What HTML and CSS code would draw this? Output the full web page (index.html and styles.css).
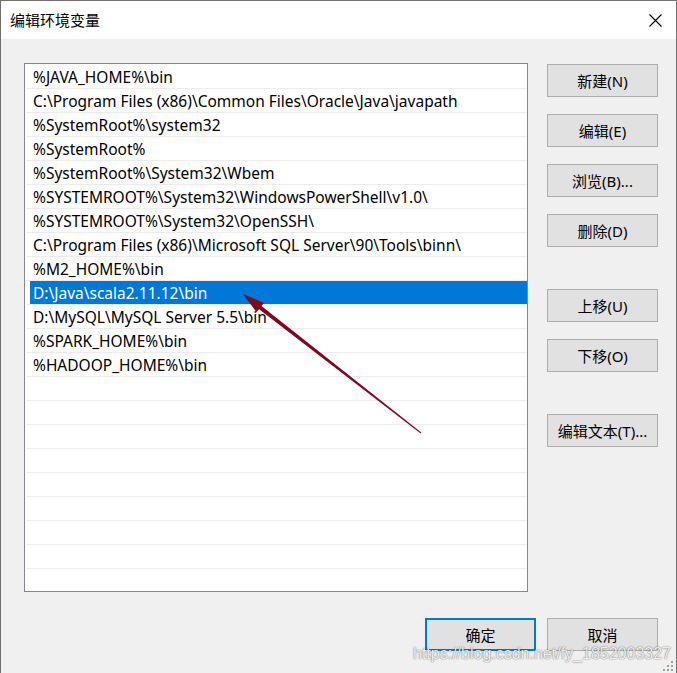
FILE: index.html
```html
<!DOCTYPE html>
<html lang="zh-CN">
<head>
<meta charset="utf-8">
<title>编辑环境变量</title>
<link rel="stylesheet" href="styles.css">
</head>
<body>
<div class="window">
  <div class="titlebar">
    <span class="title">编辑环境变量</span>
    <svg class="close" width="13" height="13" viewBox="0 0 13 13"><path d="M0.5 0.5 L12.5 12.5 M12.5 0.5 L0.5 12.5" stroke="#000" stroke-width="1.1" fill="none"/></svg>
  </div>
  <div class="content">
    <div class="main">
      <div class="list">
        <div class="row">%JAVA_HOME%\bin</div>
        <div class="row">C:\Program Files (x86)\Common Files\Oracle\Java\javapath</div>
        <div class="row">%SystemRoot%\system32</div>
        <div class="row">%SystemRoot%</div>
        <div class="row">%SystemRoot%\System32\Wbem</div>
        <div class="row">%SYSTEMROOT%\System32\WindowsPowerShell\v1.0\</div>
        <div class="row">%SYSTEMROOT%\System32\OpenSSH\</div>
        <div class="row">C:\Program Files (x86)\Microsoft SQL Server\90\Tools\binn\</div>
        <div class="row">%M2_HOME%\bin</div>
        <div class="row selected">D:\Java\scala2.11.12\bin</div>
        <div class="row">D:\MySQL\MySQL Server 5.5\bin</div>
        <div class="row">%SPARK_HOME%\bin</div>
        <div class="row">%HADOOP_HOME%\bin</div>
        <div class="row"></div>
        <div class="row"></div>
        <div class="row"></div>
        <div class="row"></div>
        <div class="row"></div>
        <div class="row"></div>
        <div class="row"></div>
        <div class="row"></div>
        <div class="row"></div>
      </div>
      <div class="side">
        <button class="btn">新建(N)</button>
        <button class="btn gap-s">编辑(E)</button>
        <button class="btn gap-s">浏览(B)...</button>
        <button class="btn gap-s">删除(D)</button>
        <button class="btn gap-l">上移(U)</button>
        <button class="btn gap-s">下移(O)</button>
        <button class="btn gap-l">编辑文本(T)...</button>
      </div>
    </div>
    <div class="footer">
      <button class="btn default">确定</button>
      <button class="btn">取消</button>
    </div>
  </div>
  <svg class="arrow" width="677" height="673" viewBox="0 0 677 673">
    <polygon points="243,294 264,302.9 261.5,306 421.3,432.6 420.7,433.4 259.1,309.2 256.6,312.3" fill="#80091b"/>
  </svg>
  <div class="watermark">https://blog.csdn.net/fy_1852003327</div>
  <svg class="grip" width="12" height="12" viewBox="0 0 12 12">
    <g fill="#a0a0a0">
      <rect x="9" y="1" width="2" height="2"/>
      <rect x="5" y="5" width="2" height="2"/>
      <rect x="9" y="5" width="2" height="2"/>
      <rect x="1" y="9" width="2" height="2"/>
      <rect x="5" y="9" width="2" height="2"/>
      <rect x="9" y="9" width="2" height="2"/>
    </g>
  </svg>
</div>
</body>
</html>
```

FILE: styles.css
```css
* {
  box-sizing: border-box;
}

html, body {
  margin: 0;
  padding: 0;
  background: #f0f0f0;
}

body {
  font-family: "Noto Sans", "Noto Sans CJK SC", sans-serif;
  font-size: 15px;
  color: #000;
}

.window {
  position: relative;
  width: 677px;
  height: 673px;
  overflow: hidden;
  background: #f0f0f0;
  border: 1px solid #707070;
  border-bottom: 0;
}

.titlebar {
  height: 38px;
  background: #fff;
  display: flex;
  align-items: center;
  justify-content: space-between;
  padding-left: 9px;
  padding-right: 14px;
}

.title {
  font-family: "Noto Sans CJK SC", sans-serif;
  font-size: 15px;
  line-height: 20px;
}

.close {
  display: block;
}

.content {
  padding: 24px 18px 0 23px;
}

.main {
  display: flex;
  gap: 19px;
}

.list {
  width: 504px;
  height: 529px;
  background: #fff;
  border: 1px solid #828790;
  padding-top: 1px;
  overflow: hidden;
}

.row {
  height: 24px;
  margin-left: 1px;
  border-bottom: 1px solid #ececec;
  padding-left: 7px;
  padding-top: 1px;
  font-size: 15.5px;
  line-height: 22px;
  white-space: nowrap;
}

.row.selected {
  background: linear-gradient(to right, transparent 4px, #0078d7 4px);
  color: #fff;
}

.side {
  width: 111px;
  padding-top: 1px;
  display: flex;
  flex-direction: column;
}

.btn {
  width: 111px;
  height: 33px;
  background: #e1e1e1;
  border: 1px solid #adadad;
  border-radius: 0;
  font-family: "Noto Sans", "Noto Sans CJK SC", sans-serif;
  font-size: 15px;
  color: #000;
  padding: 0;
  line-height: 20px;
}

.gap-s {
  margin-top: 17px;
}

.gap-l {
  margin-top: 42px;
}

.footer {
  display: flex;
  justify-content: flex-end;
  gap: 11px;
  margin-top: 26px;
}

.btn.default {
  border: 2px solid #0078d7;
}

.arrow {
  position: absolute;
  left: -1px;
  top: -1px;
  pointer-events: none;
}

.watermark {
  position: absolute;
  left: 412px;
  top: 643px;
  font-family: "Liberation Sans", sans-serif;
  font-size: 16px;
  line-height: 20px;
  color: rgba(255, 255, 255, 0.9);
  text-shadow: 0 0 1px rgba(0, 0, 0, 0.5), 0 0 2px rgba(0, 0, 0, 0.3);
  white-space: nowrap;
}

.grip {
  position: absolute;
  right: 2px;
  bottom: 1px;
}
```
